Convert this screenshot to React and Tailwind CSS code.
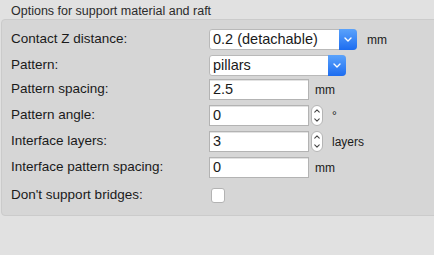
import React from "react";

const font = { fontFamily: '"Liberation Sans", Arial, sans-serif' };

function Chevron({ up = false, className = "" }) {
  return (
    <svg viewBox="0 0 8 5" className={className} fill="none" stroke="currentColor" strokeWidth="1.4" strokeLinecap="round" strokeLinejoin="round">
      <path d={up ? "M1 4 L4 1 L7 4" : "M1 1 L4 4 L7 1"} />
    </svg>
  );
}

function Select({ value, width }) {
  return (
    <div className={`flex h-[21px] ${width} rounded-[3px] border border-[#b9b9b9] bg-white`}>
      <div className="flex-1 pl-[3px] text-[14.5px] leading-[19px] text-[#1a1a1a]">{value}</div>
      <div className="flex w-[18px] items-center justify-center -my-px -mr-px rounded-r-[4px] bg-gradient-to-b from-[#5aa2fb] to-[#1c6cf0] text-white">
        <Chevron className="h-[5px] w-[8px]" />
      </div>
    </div>
  );
}

function Field({ value }) {
  return (
    <div className="h-[21px] w-[100px] border border-[#b3b3b3] bg-white pl-[3px] text-[14.5px] leading-[19px] text-[#1a1a1a] shadow-[inset_0_1px_0_#e2e2e2]">
      {value}
    </div>
  );
}

function Stepper() {
  return (
    <div className="ml-[2px] flex h-[21px] w-[12px] flex-col items-center justify-between rounded-[6px] border border-[#b5b5b5] bg-white py-[3px] text-[#444]">
      <Chevron up className="h-[4px] w-[6px]" />
      <Chevron className="h-[4px] w-[6px]" />
    </div>
  );
}

function Row({ label, children, className = "" }) {
  return (
    <div className={`flex h-[21px] items-center ${className}`}>
      <div className="w-[207px] pl-[9px] text-[13.5px] text-[#1a1a1a]">{label}</div>
      <div className="flex items-center">{children}</div>
    </div>
  );
}

function Unit({ children, className = "" }) {
  return <span className={`text-[12px] text-[#1a1a1a] ${className}`}>{children}</span>;
}

export default function App() {
  return (
    <div className="h-[255px] w-[434px] overflow-hidden bg-[#e1e1e1]" style={font}>
      <div className="h-[19px] pl-[11px] pt-[4px] text-[12.5px] leading-[15px] text-[#2b2b2b]">
        Options for support material and raft
      </div>
      <div className="ml-[1px] w-[450px] rounded-[4px] border border-[#cbcbcb] bg-[#d6d6d6] pb-[9px] pt-[9px]">
        <Row label="Contact Z distance:">
          <Select value="0.2 (detachable)" width="w-[148px]" />
          <Unit className="ml-[10px]">mm</Unit>
        </Row>
        <Row label="Pattern:" className="mt-[5px]">
          <Select value="pillars" width="w-[137px]" />
        </Row>
        <Row label="Pattern spacing:" className="mt-[3px]">
          <Field value="2.5" />
          <Unit className="ml-[6px]">mm</Unit>
        </Row>
        <Row label="Pattern angle:" className="mt-[5px]">
          <Field value="0" />
          <Stepper />
          <Unit className="ml-[9px]">°</Unit>
        </Row>
        <Row label="Interface layers:" className="mt-[5px]">
          <Field value="3" />
          <Stepper />
          <Unit className="ml-[9px]">layers</Unit>
        </Row>
        <Row label="Interface pattern spacing:" className="mt-[5px]">
          <Field value="0" />
          <Unit className="ml-[6px]">mm</Unit>
        </Row>
        <Row label="Don't support bridges:" className="mt-[7px]">
          <div className="ml-[2px] h-[15px] w-[14px] rounded-[3px] border border-[#b3b3b3] bg-white" />
        </Row>
      </div>
    </div>
  );
}
